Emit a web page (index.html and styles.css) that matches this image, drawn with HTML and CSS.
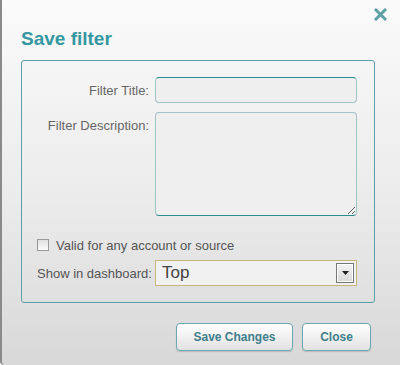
FILE: index.html
```html
<!DOCTYPE html>
<html lang="en">
<head>
  <meta charset="UTF-8" />
  <title>Save filter</title>
  <link rel="stylesheet" href="styles.css">
</head>
<body>
  <div class="dialog">
    <div class="dialog-head">
      <h2>Save filter</h2>
      <button class="close-x" title="Close">
        <svg width="13" height="13" viewBox="0 0 13 13"><path d="M2 2 L11 11 M11 2 L2 11" stroke="#5f9fa6" stroke-width="3" stroke-linecap="square"/></svg>
      </button>
    </div>

    <div class="box">
      <div class="field">
        <label class="lbl">Filter Title:</label>
        <input type="text" class="txt" />
      </div>
      <div class="field">
        <label class="lbl">Filter Description:</label>
        <textarea class="txt area"></textarea>
      </div>
      <label class="check-row">
        <span class="check"></span>
        Valid for any account or source
      </label>
      <div class="dash-row">
        <span class="dash-lbl">Show in dashboard:</span>
        <div class="select">
          <span>Top</span>
          <span class="drop"><svg width="7" height="4" viewBox="0 0 7 4"><path d="M0 0 H7 L3.5 4 Z" fill="#222"/></svg></span>
        </div>
      </div>
    </div>

    <div class="actions">
      <button class="btn save">Save Changes</button>
      <button class="btn">Close</button>
    </div>
  </div>
</body>
</html>
```

FILE: styles.css
```css
* { box-sizing: border-box; }

body {
  margin: 0;
  font-family: 'Liberation Sans', Arial, sans-serif;
}

.dialog {
  width: 400px;
  height: 365px;
  background: linear-gradient(#fafafa, #ebebeb 55%, #d8d8d9);
  border-left: 2px solid #8a8a8a;
  border-bottom-left-radius: 4px;
  padding: 0 25px 0 19px;
}

.dialog-head {
  display: flex;
  justify-content: space-between;
  height: 60px;
}

.dialog-head h2 {
  margin: 28px 0 0;
  font-size: 19px;
  color: #3597a1;
  line-height: 22px;
}

.close-x {
  background: none;
  border: none;
  padding: 0;
  margin: 8px -12px 0 0;
  height: 13px;
  display: flex;
}

.box {
  border: 1px solid #5c9fa6;
  border-radius: 3px;
  padding: 16px 17px 16px 15px;
}

.field {
  display: flex;
  margin-bottom: 9px;
}

.field:nth-child(2) { margin-bottom: 20px; }

.lbl {
  width: 118px;
  text-align: right;
  font-size: 13px;
  color: #666;
  padding-right: 6px;
  padding-top: 6px;
}

.txt {
  width: 202px;
  height: 26px;
  background: #efefef;
  border: 1px solid #a2c3c8;
  border-top-color: #2f8a8c;
  border-radius: 4px;
  margin: 0;
}

.area {
  height: 104px;
  border-top-color: #a2c3c8;
  border-bottom-color: #2f8a8c;
  resize: vertical;
}

.check-row {
  display: flex;
  align-items: center;
  gap: 7px;
  font-size: 13px;
  color: #555;
  height: 18px;
}

.check {
  width: 12px;
  height: 12px;
  border: 1px solid #999;
  background: linear-gradient(#e0e0e0, #fafafa);
}

.dash-row {
  display: flex;
  align-items: center;
  margin-top: 6px;
}

.dash-lbl {
  width: 118px;
  font-size: 13px;
  color: #555;
}

.select {
  width: 202px;
  height: 26px;
  border: 1px solid #c5b779;
  background: #f1f1f1;
  display: flex;
  align-items: center;
  justify-content: space-between;
  padding: 0 2px 0 6px;
  font-size: 17px;
  color: #444;
}

.drop {
  width: 18px;
  height: 20px;
  border: 1px solid #777;
  background: linear-gradient(#f4f4f4, #d8d8d8);
  box-shadow: inset 0 0 0 1px #fff;
  display: flex;
  align-items: center;
  justify-content: center;
}

.actions {
  display: flex;
  justify-content: flex-end;
  gap: 9px;
  margin: 20px 4px 0 0;
}

.btn {
  height: 28px;
  width: 69px;
  border: 1px solid #6aa9b1;
  border-radius: 4px;
  background: linear-gradient(#ffffff, #e2e2e2);
  box-shadow: 0 1px 1px rgba(0, 0, 0, 0.15);
  font-family: 'Liberation Sans', Arial, sans-serif;
  font-weight: bold;
  font-size: 12px;
  color: #3f7f8b;
}

.btn.save { width: 117px; }
```
